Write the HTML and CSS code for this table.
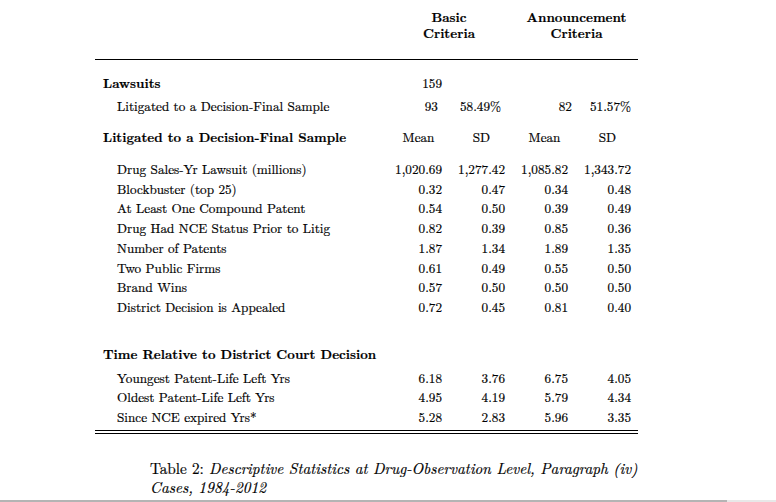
FILE: index.html
```html
<!DOCTYPE html>
<html lang="en">
<head>
<meta charset="utf-8">
<title>Table 2</title>
<link rel="stylesheet" href="styles.css">
</head>
<body>
<main class="page">
  <table class="stats">
    <colgroup>
      <col class="c-label"><col class="c-num"><col class="c-num"><col class="c-num"><col class="c-num"><col class="c-end">
    </colgroup>
    <thead>
      <tr>
        <th class="h-blank"></th>
        <th colspan="2" class="h-group h-basic">Basic<br>Criteria</th>
        <th colspan="3" class="h-group h-ann">Announcement<br>Criteria</th>
      </tr>
    </thead>
    <tbody>
      <tr class="r-lawsuits">
        <th class="sec">Lawsuits</th><td>159</td><td></td><td></td><td></td><td></td>
      </tr>
      <tr class="r-lit">
        <td class="sub">Litigated to a Decision-Final Sample</td>
        <td colspan="2"><div class="pair pair-a"><span>93</span><span>58.49%</span></div></td>
        <td colspan="2"><div class="pair pair-b"><span>82</span><span>51.57%</span></div></td>
        <td></td>
      </tr>
      <tr class="r-head">
        <th class="sec">Litigated to a Decision-Final Sample</th>
        <td class="ch">Mean</td><td class="ch">SD</td><td class="ch">Mean</td><td class="ch">SD</td><td></td>
      </tr>
      <tr class="r-data r-first">
        <td class="sub">Drug Sales-Yr Lawsuit (millions)</td><td>1,020.69</td><td>1,277.42</td><td>1,085.82</td><td>1,343.72</td><td></td>
      </tr>
      <tr class="r-data">
        <td class="sub">Blockbuster (top 25)</td><td>0.32</td><td>0.47</td><td>0.34</td><td>0.48</td><td></td>
      </tr>
      <tr class="r-data">
        <td class="sub">At Least One Compound Patent</td><td>0.54</td><td>0.50</td><td>0.39</td><td>0.49</td><td></td>
      </tr>
      <tr class="r-data">
        <td class="sub">Drug Had NCE Status Prior to Litig</td><td>0.82</td><td>0.39</td><td>0.85</td><td>0.36</td><td></td>
      </tr>
      <tr class="r-data">
        <td class="sub">Number of Patents</td><td>1.87</td><td>1.34</td><td>1.89</td><td>1.35</td><td></td>
      </tr>
      <tr class="r-data">
        <td class="sub">Two Public Firms</td><td>0.61</td><td>0.49</td><td>0.55</td><td>0.50</td><td></td>
      </tr>
      <tr class="r-data">
        <td class="sub">Brand Wins</td><td>0.57</td><td>0.50</td><td>0.50</td><td>0.50</td><td></td>
      </tr>
      <tr class="r-data">
        <td class="sub">District Decision is Appealed</td><td>0.72</td><td>0.45</td><td>0.81</td><td>0.40</td><td></td>
      </tr>
      <tr class="r-time">
        <th class="sec">Time Relative to District Court Decision</th><td></td><td></td><td></td><td></td><td></td>
      </tr>
      <tr class="r-trow">
        <td class="sub">Youngest Patent-Life Left Yrs</td><td>6.18</td><td>3.76</td><td>6.75</td><td>4.05</td><td></td>
      </tr>
      <tr class="r-trow">
        <td class="sub">Oldest Patent-Life Left Yrs</td><td>4.95</td><td>4.19</td><td>5.79</td><td>4.34</td><td></td>
      </tr>
      <tr class="r-trow r-last">
        <td class="sub">Since NCE expired Yrs*</td><td>5.28</td><td>2.83</td><td>5.96</td><td>3.35</td><td></td>
      </tr>
    </tbody>
  </table>
  <p class="caption">Table 2: <em>Descriptive Statistics at Drug-Observation Level, Paragraph (iv) Cases, 1984-2012</em></p>
</main>
<div class="hscroll"><div class="hscroll-thumb"></div><div class="hscroll-track"></div></div>
</body>
</html>
```

FILE: styles.css
```css
html, body {
  margin: 0;
  padding: 0;
  background: #fff;
}

body {
  width: 776px;
  height: 502px;
  overflow: hidden;
  display: flex;
  flex-direction: column;
  font-family: "Latin Modern Roman", "Liberation Serif", serif;
  color: #000;
  -webkit-text-stroke: 0.2px #000;
}

.page {
  flex: 1;
  padding-left: 95px;
}

.stats {
  width: 543px;
  table-layout: fixed;
  border-collapse: separate;
  border-spacing: 0;
  font-family: "Latin Modern Roman", "Liberation Serif", serif;
  font-size: 13.2px;
}

.c-label { width: 284px; }
.c-num { width: 63px; }
.c-end { width: 7px; }

.stats th,
.stats td {
  padding: 0;
  text-align: right;
  white-space: nowrap;
  font-weight: normal;
  vertical-align: top;
}

.stats thead th {
  border-bottom: 1px solid #000;
  padding-top: 9px;
  padding-bottom: 18px;
  line-height: 16px;
  font-weight: bold;
  text-align: center;
}

.stats thead .h-basic { padding-left: 14px; }
.stats thead .h-ann { padding-left: 10px; }

.stats .sec {
  text-align: left;
  padding-left: 8px;
  font-weight: bold;
}

.stats .sub {
  text-align: left;
  padding-left: 22px;
}

.stats .ch {
  text-align: center;
  padding-left: 16px;
}

.pair {
  display: flex;
  justify-content: flex-end;
}
.pair-a { gap: 22px; padding-right: 4px; }
.pair-b { gap: 18px; }

.stats .r-lawsuits > * { padding-top: 12px; line-height: 22px; }
.stats .r-lit > * { line-height: 24px; }
.stats .r-head > * { padding-top: 8px; line-height: 22px; }
.stats .r-data > * { line-height: 19.7px; }
.stats .r-first > * { padding-top: 11px; }
.stats .r-time > * { padding-top: 26px; padding-bottom: 3px; line-height: 22px; }
.stats .r-trow > * { line-height: 19.5px; }
.stats .r-last > * {
  padding-bottom: 3.5px;
  border-bottom: 4px double #000;
}

.caption {
  margin: 24px 0 0 55px;
  width: 505px;
  font-family: "Latin Modern Roman", "Liberation Serif", serif;
  font-size: 15.25px;
  line-height: 19px;
}

.hscroll {
  display: flex;
  height: 2px;
}
.hscroll-thumb { width: 727px; background: #b4b4b4; }
.hscroll-track { flex: 1; background: #e8e8e8; }
```
